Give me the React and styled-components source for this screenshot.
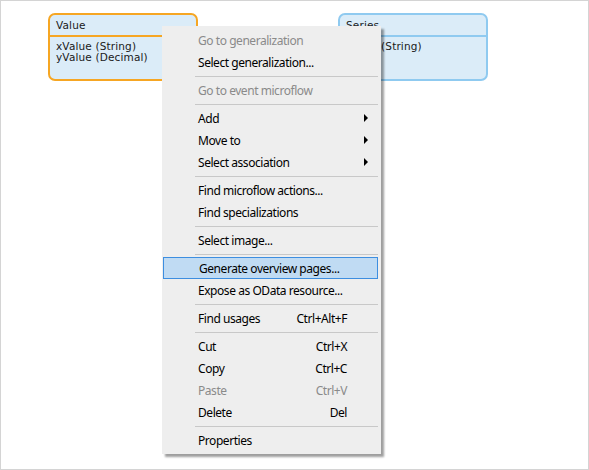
import React from 'react'
import styled, { createGlobalStyle } from 'styled-components'

const GlobalStyle = createGlobalStyle`
	html, body {
		margin: 0;
		padding: 0;
		background: #ffffff;
	}
`

const menuItems = [
	{ label: 'Go to generalization', disabled: true },
	{ label: 'Select generalization...' },
	{ separator: true },
	{ label: 'Go to event microflow', disabled: true },
	{ separator: true },
	{ label: 'Add', submenu: true },
	{ label: 'Move to', submenu: true },
	{ label: 'Select association', submenu: true },
	{ separator: true },
	{ label: 'Find microflow actions...' },
	{ label: 'Find specializations' },
	{ separator: true },
	{ label: 'Select image...' },
	{ separator: true },
	{ label: 'Generate overview pages...', active: true },
	{ label: 'Expose as OData resource...' },
	{ separator: true },
	{ label: 'Find usages', shortcut: 'Ctrl+Alt+F' },
	{ separator: true },
	{ label: 'Cut', shortcut: 'Ctrl+X' },
	{ label: 'Copy', shortcut: 'Ctrl+C' },
	{ label: 'Paste', shortcut: 'Ctrl+V', disabled: true },
	{ label: 'Delete', shortcut: 'Del' },
	{ separator: true },
	{ label: 'Properties' },
]

// entity node on the domain model canvas
const Entity = ({ name, attributes, left, accent }) => (
	<StyledEntity $left={left} $accent={accent}>
		<EntityHeader $accent={accent}>{name}</EntityHeader>
		<EntityBody>
			{attributes.map(attr => (
				<Attribute key={attr}>{attr}</Attribute>
			))}
		</EntityBody>
	</StyledEntity>
)

const App = () => {
	return (
		<>
			<GlobalStyle />
			<Canvas>
				<Entity name='Value' left={48} accent='#f6a623' attributes={['xValue (String)', 'yValue (Decimal)']} />
				<Entity name='Series' left={338} accent='#8fcaf0' attributes={['Name (String)']} />
				<ContextMenu>
					{menuItems.map((item, i) =>
						item.separator ? (
							<Separator key={i} />
						) : (
							<MenuItem key={i} $disabled={item.disabled} $active={item.active}>
								<span>{item.label}</span>
								{item.shortcut && <Shortcut>{item.shortcut}</Shortcut>}
								{item.submenu && <SubArrow />}
							</MenuItem>
						)
					)}
				</ContextMenu>
			</Canvas>
		</>
	)
}

const Canvas = styled.div`
	position: relative;
	width: 589px;
	height: 470px;
	box-sizing: border-box;
	border: 1px solid #d4d4d4;
	background: #ffffff;
	overflow: hidden;
`

const StyledEntity = styled.div`
	position: absolute;
	top: 12px;
	left: ${props => props.$left - 1}px;
	width: 150px;
	height: 68px;
	box-sizing: border-box;
	border: 2px solid ${props => props.$accent};
	border-radius: 7px;
	background: #dbecf8;
	font-family: 'DejaVu Sans', Verdana, sans-serif;
	font-size: 10.5px;
	letter-spacing: 0.15px;
	color: #1a1a1a;
`

const EntityHeader = styled.div`
	height: 20px;
	line-height: 21px;
	padding: 0 6px;
	border-bottom: 2px solid ${props => props.$accent};
`

const EntityBody = styled.div`
	display: flex;
	flex-direction: column;
	padding: 4px 6px 0;
`

const Attribute = styled.div`
	height: 11px;
	line-height: 11px;
`

const ContextMenu = styled.div`
	position: absolute;
	left: 161px;
	top: 25px;
	width: 219px;
	padding: 3px 0;
	background: #eeeeee;
	box-shadow: 3px 3px 2px rgba(0, 0, 0, 0.38);
	font-family: 'Noto Sans', 'Open Sans', sans-serif;
	font-size: 12px;
	letter-spacing: -0.45px;
`

const MenuItem = styled.div`
	position: relative;
	display: flex;
	align-items: center;
	justify-content: space-between;
	height: 22px;
	box-sizing: border-box;
	padding: 0 34px 0 36px;
	color: ${props => (props.$disabled ? '#8a8a8a' : '#000000')};
	white-space: nowrap;
	${props =>
		props.$active &&
		`
		margin: 0 3px 0 1px;
		padding: 0 31px 0 35px;
		border: 1px solid #3d8ee0;
		background: #c0dbf3;
	`}
`

const Shortcut = styled.span`
	text-align: right;
`

const SubArrow = styled.span`
	position: absolute;
	right: 13px;
	top: 7px;
	width: 0;
	height: 0;
	border-top: 4px solid transparent;
	border-bottom: 4px solid transparent;
	border-left: 4px solid #000000;
`

const Separator = styled.div`
	height: 6px;
	margin: 0 3px 0 33px;
	box-sizing: border-box;
	padding-top: 3px;
	&::after {
		content: '';
		display: block;
		height: 1px;
		background: #c8c8c8;
	}
`

export default App
